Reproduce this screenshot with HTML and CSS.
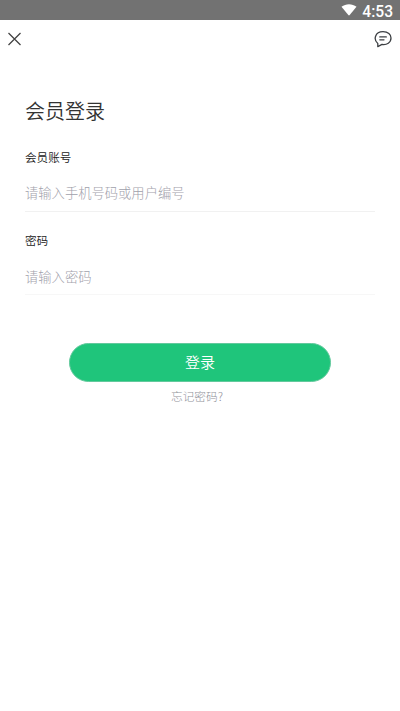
FILE: index.html
```html
<!DOCTYPE html>
<html lang="zh-CN">
<head>
<meta charset="utf-8">
<title>会员登录</title>
<link rel="stylesheet" href="styles.css">
</head>
<body>
<header class="status">
<svg class="wifi" width="16" height="12" viewBox="0 0 16 12"><path d="M0.5 2.800C4.800-.6 11.200-.6 15.500 2.800L8.700 11Q8 11.800 7.300 11Z" fill="#fff"/></svg>
<span class="time">4:53</span>
</header>
<nav class="nav">
<svg width="13" height="14" viewBox="0 0 13 14" fill="none" stroke="#444" stroke-width="1.3"><path d="M.5 1L12.500 13M12.500 1L.5 13"/></svg>
<svg width="18" height="17" viewBox="0 0 18 17" fill="none" stroke="#3c3f43" stroke-width="1.300" stroke-linecap="round" stroke-linejoin="round"><path d="M3.800 12.400C-.8 8.800 .8 .7 9 .7C14 .7 17 3.500 17 7C17 11.600 12.800 14.100 8 13.400L3.800 15.600Z"/><path d="M5.800 5.900H12.300M5.800 8.800H10"/></svg>
</nav>
<main class="login">
<h1 class="title">会员登录</h1>
<form class="form">
<div class="field"><div class="label">会员账号</div><div class="entry">请输入手机号码或用户编号</div></div>
<div class="field last"><div class="label">密码</div><div class="entry">请输入密码</div></div>
<button class="submit" type="button">登录</button>
<a class="forgot">忘记密码?</a>
</form>
</main>
</body>
</html>
```

FILE: styles.css
```css
* { box-sizing: border-box; }
body { margin: 0; background: #fff; color: #333; font-family: "Noto Sans CJK SC", sans-serif; font-weight: 350; }
.status { height: 20px; background: #727272; display: flex; justify-content: flex-end; align-items: center; gap: 6px; padding-right: 7px; }
.wifi { position: relative; left: 1px; }
.time { color: #fff; font: 500 15.600px/20px Roboto, sans-serif; padding-top: 3px; }
.nav { height: 38px; display: flex; justify-content: space-between; align-items: center; padding: 0 8px; }
.login { padding: 37px 25px 0; }
.title { margin: 0; font-size: 20px; line-height: 32px; font-weight: 350; color: #333; }
.form { display: flex; flex-direction: column; margin-top: 20px; }
.field { height: 83px; }
.label { font-size: 11.600px; line-height: 20px; font-weight: 350; color: #222; }
.entry { height: 45px; border-bottom: 1px solid #f1f1f1; font-size: 13.300px; line-height: 51px; color: #9fa1ab; font-weight: 300; }
.last .entry { border-color: #f7f7f7; line-height: 53px; }
.submit { width: 262px; height: 39px; margin: 30px auto 0; border: 1px solid #63c99d; border-radius: 20px; background: #1fc57b; color: #fff; font: 350 15px/36px "Noto Sans CJK SC", sans-serif; padding: 0 0 1px; }
.forgot { align-self: center; margin: 4px 6px 0 0; font-size: 11.700px; line-height: 20px; color: #8f9199; font-weight: 300; }
```
